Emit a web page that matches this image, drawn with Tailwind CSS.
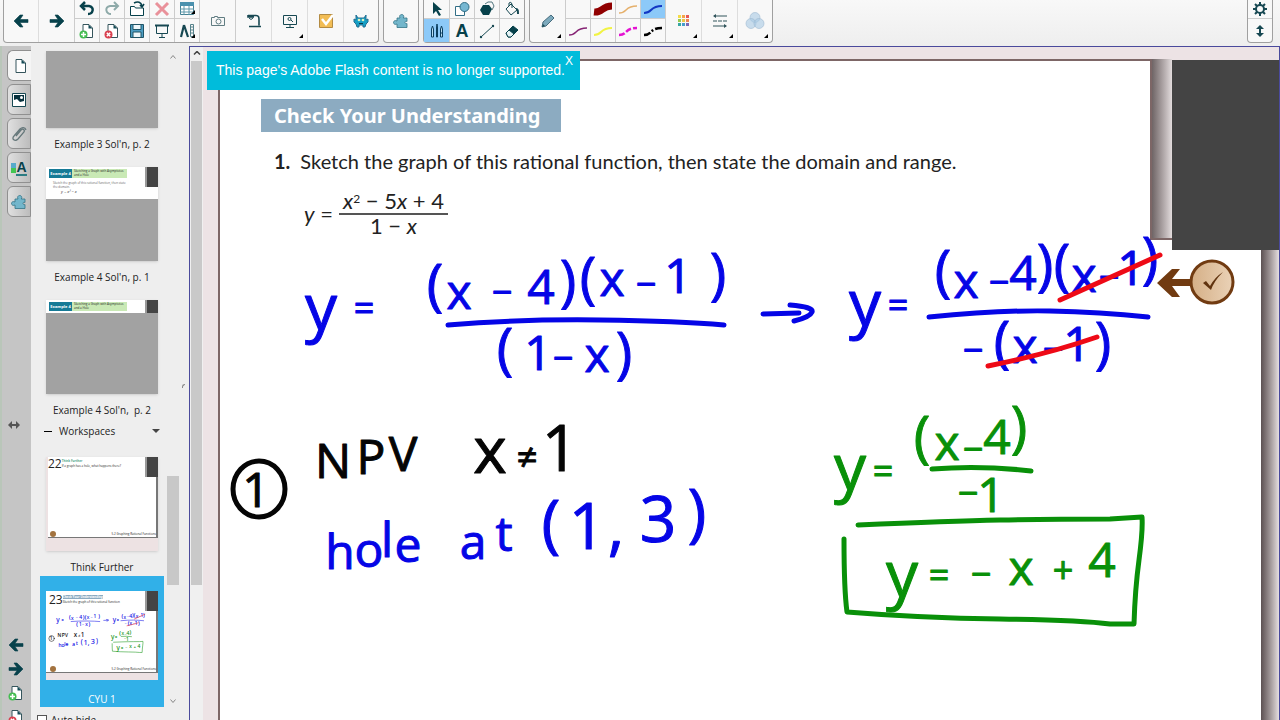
<!DOCTYPE html>
<html lang="en">
<head>
    <meta charset="UTF-8">
    <meta name="viewport" content="width=device-width, initial-scale=1.0">
    <title>Rational Functions - Notebook</title>
    <script src="https://cdn.jsdelivr.net/npm/@tailwindcss/browser@4"></script>
</head>
<body class="h-screen flex flex-col overflow-hidden bg-[#eeeeee] font-['Open_Sans',sans-serif] text-[#222222]">

    <!-- Shared icons -->
    <svg class="hidden">
        <symbol id="arrow-left" viewBox="0 0 16 16"><path d="M1 8 7 2h3L7 6.500h8v3H7L10 14H7z" fill="#07414b" stroke="#07414b" stroke-width=".6"/></symbol>
        <symbol id="arrow-right" viewBox="0 0 16 16"><path d="M15 8 9 2H6l3 4.500H1v3h8L6 14h3z" fill="#07414b" stroke="#07414b" stroke-width=".6"/></symbol>
        <symbol id="page" viewBox="0 0 16 16"><path d="M4 1.500h6l3.500 3.500v9.500H4z" fill="#fff" stroke="#35555c"/><path d="M9.500 1.500v4h4z" fill="#164c57"/></symbol>
        <symbol id="page-add" viewBox="0 0 16 16"><use href="#page"/><circle cx="4.500" cy="11.500" r="4" fill="#45bd52"/><path d="M4.500 9v5M2 11.500h5" stroke="#fff" stroke-width="1.500"/></symbol>
        <symbol id="page-delete" viewBox="0 0 16 16"><use href="#page"/><circle cx="4.500" cy="11.500" r="4" fill="#d9404f"/><path d="m2.800 9.800 3.400 3.400m0-3.400-3.400 3.400" stroke="#fff" stroke-width="1.500"/></symbol>
        <symbol id="puzzle" viewBox="0 0 16 16"><path d="M4 5h3c-1-2 0-3.500 1.700-3.500S11.500 3 10.300 5H14v3.500c-1.500-.8-2 .2-2 1s.8 1.500 2 1V14.500H4V11c-2 1-3.500 0-3.500-1.500S2 7 4 8z" fill="#73b6cb" stroke="#337487" stroke-width=".8"/></symbol>
        <symbol id="corner" viewBox="0 0 4 4"><path d="M4 0v4H0z" fill="#000"/></symbol>
    </svg>

    <!-- Toolbar -->
    <header class="flex h-[46px] shrink-0 items-start gap-1 bg-gradient-to-b from-[#f8f8f8] to-[#eeeeee] pl-[3px] pr-[7px]">
        <div class="flex h-[43px] rounded-b border border-t-0 border-[#a0a0a0] bg-[#f8f8f8]">
            <button aria-label="Previous page" class="flex w-[35px] items-center justify-center border-r border-[#dddddd]"><svg class="size-4"><use href="#arrow-left"/></svg></button>
            <button aria-label="Next page" class="flex w-[35px] items-center justify-center"><svg class="size-4"><use href="#arrow-right"/></svg></button>
            <div class="grid grid-cols-[repeat(5,25px)] grid-rows-[19px_23px]">
                <button aria-label="Undo" class="flex items-center justify-center border-b border-l border-[#cccccc]"><svg class="size-4" viewBox="0 0 16 16" fill="none" stroke="#07414b" stroke-width="2.500"><path d="M2 5h8c6 1 4 8-1 8M6 1 2 5l4 4"/></svg></button>
                <button aria-label="Redo" class="flex items-center justify-center border-b border-l border-[#cccccc]"><svg class="size-4" viewBox="0 0 16 16" fill="none" stroke="#8eaaa9" stroke-width="2"><path d="M14 5H6C0 6 2 13 7 13M10 1l4 4-4 4"/></svg></button>
                <button aria-label="Open" class="flex items-center justify-center border-b border-l border-[#cccccc]"><svg class="size-4" viewBox="0 0 16 16" fill="#fff" stroke="#07414b"><path d="M1.500 5.500h4l1 1.500h8v7.500h-13z"/><path d="M5 2c4-2 7-1 8 3m-2-1 2 2 2-3" fill="none" stroke-width="1.600"/></svg></button>
                <button aria-label="Delete" class="flex items-center justify-center border-b border-l border-[#cccccc]"><svg class="size-4" viewBox="0 0 16 16" stroke="#e9919a" stroke-width="3"><path d="m2 2 12 12M14 2 2 14"/></svg></button>
                <button aria-label="Table" class="relative flex items-center justify-center border-b border-l border-[#cccccc]"><svg class="size-4" viewBox="0 0 16 16"><path d="M1.500 1.500h13v12h-13z" fill="#fff" stroke="#438092"/><path d="M1 1h14v4H1z" fill="#4b91ae"/><path d="M1 8h14M1 11h14M5 5v9m5-9v9" stroke="#5f98aa"/></svg><svg class="absolute bottom-1 right-1 size-1"><use href="#corner"/></svg></button>
                <button aria-label="Add page" class="flex items-center justify-center border-l border-[#cccccc]"><svg class="size-4"><use href="#page-add"/></svg></button>
                <button aria-label="Delete page" class="flex items-center justify-center border-l border-[#cccccc]"><svg class="size-4"><use href="#page-delete"/></svg></button>
                <button aria-label="Save" class="flex items-center justify-center border-l border-[#cccccc]"><svg class="size-4" viewBox="0 0 16 16" stroke="#205466"><path d="M1.500 1.500h13v13h-13z" fill="#4d9dc3"/><path d="M4 1.500h8v5H4zM4 9h8v5.500H4z" fill="#eef7fa"/></svg></button>
                <button aria-label="Screen shade" class="flex items-center justify-center border-l border-[#cccccc]"><svg class="size-4" viewBox="0 0 16 16" fill="none" stroke="#174852"><path d="M1 2.500h14" stroke-width="2"/><path d="M2.500 3v7.500h11V3M8 11v3m-3 .5h6"/></svg></button>
                <button aria-label="Measurement tools" class="relative flex items-center justify-center border-l border-[#cccccc]"><svg class="size-4" viewBox="0 0 16 16" fill="none" stroke="#174852"><path d="m5 2-3 12M5 2l4 12" stroke-width="2.200"/><path d="M11.500 1.500h3v12h-3zM12 4h2m-2 3h2m-2 3h2" stroke="#56828b"/></svg><svg class="absolute bottom-1 right-1 size-1"><use href="#corner"/></svg></button>
            </div>
            <button aria-label="Capture" class="flex w-9 items-center justify-center border-l border-[#cccccc]"><svg class="size-4" viewBox="0 0 16 16" fill="none" stroke="#617d82"><path d="M1.500 4.500h3v-1h3v1h7v8h-13z"/><circle cx="8.500" cy="8.500" r="2.500"/></svg></button>
            <button aria-label="Document camera" class="flex w-9 items-center justify-center border-l border-[#cccccc]"><svg class="size-4" viewBox="0 0 16 16" fill="none" stroke="#174852"><path d="M2 2.500h8c3 0 3 2 3 5v5M2 2v2h6M3 13.500h12" stroke-width="1.600"/><path d="M3 5q2 3 4 0"/></svg></button>
            <button aria-label="Display" class="relative flex w-9 items-center justify-center border-l border-[#dddddd]"><svg class="size-4" viewBox="0 0 16 16" fill="none" stroke="#174852"><path d="M1.500 2.500h13v9h-13zM8 12v2m-4 .5h8"/><circle cx="7.500" cy="6" r="1.500"/><path d="m9 7 2 2"/></svg><svg class="absolute bottom-1 right-1 size-1"><use href="#corner"/></svg></button>
            <button aria-label="Response" class="flex w-9 items-center justify-center border-l border-[#dddddd]"><svg class="size-4" viewBox="0 0 16 16"><path d="M1.500 1.500h13v13h-13z" fill="#f2bd55" stroke="#b38b43"/><path d="m4 6 4 5 7-9" fill="none" stroke="#fff" stroke-width="2.500"/></svg></button>
            <button aria-label="Activity builder" class="flex w-[35px] items-center justify-center border-l border-[#dddddd]"><svg class="size-4" viewBox="0 0 16 16"><path d="M3 2l2 3h6l2-3v5l2-1v3l-2 2-1 3h-2v-2H6v2H4l-1-3-2-2V6l2 1z" fill="#159fc5" stroke="#236f92"/><circle cx="6" cy="7" r="1.300" fill="#dff2bd"/><circle cx="10" cy="7" r="1.300" fill="#dff2bd"/><path d="M6 10.500h4" stroke="#083d4f"/></svg></button>
        </div>

        <div class="flex h-[43px] w-9 justify-center rounded-b border border-t-0 border-[#a0a0a0] bg-[#f8f8f8]">
            <button aria-label="Add-ons" class="flex items-center justify-center"><svg class="size-4"><use href="#puzzle"/></svg></button>
        </div>

        <div class="grid h-[43px] grid-cols-[repeat(4,25px)] grid-rows-[19px_23px] rounded-b border border-t-0 border-[#a0a0a0] bg-[#f8f8f8]">
            <button aria-label="Select" class="flex items-center justify-center border-b border-[#cccccc]"><svg class="size-4" viewBox="0 0 16 16"><path d="m4 1 9 8H9l3 5-2 1-3-5-3 3z" fill="#07414b"/></svg></button>
            <button aria-label="Shapes" class="flex items-center justify-center border-b border-l border-[#cccccc]"><svg class="size-4" viewBox="0 0 16 16" stroke="#316e86"><path d="M1.500 5.500h9v9h-9z" fill="#fff"/><circle cx="10.500" cy="6" r="4.500" fill="#76b7d2"/></svg></button>
            <button aria-label="Regular polygons" class="flex items-center justify-center border-b border-l border-[#cccccc]"><svg class="size-4" viewBox="0 0 16 16"><path d="m6 3 3-2h4l2 4-2 4" fill="none" stroke="#53777f"/><path d="m4 4 6 0 3 4-3 6H4L1 9z" fill="#07414b"/></svg></button>
            <button aria-label="Fill" class="flex items-center justify-center border-b border-l border-[#cccccc]"><svg class="size-4" viewBox="0 0 16 16" fill="none" stroke="#174852"><path d="m7 3 6 6-6 5-5-6zM5 5V2q2-2 3 1v4"/><path d="M12 8c2 0 2 2 2 5" stroke-width="2"/></svg></button>
            <button aria-label="Pens" class="flex items-center justify-center bg-[#8cc9f8]"><svg class="size-4" viewBox="0 0 16 16" stroke="#0b3e60"><path d="M2.500 14V6L3.500 3l1 3v8z" fill="#b9def5"/><path d="M7.500 14V5L8 1l.500 4v9z" fill="#07414b"/><path d="M11.500 14V6l1-3 1 3v8zM11.500 10h2" fill="#b9def5"/></svg></button>
            <button aria-label="Text" class="flex items-center justify-center border-l border-[#cccccc] font-['Liberation_Sans',sans-serif] text-lg leading-none font-bold text-[#07414b]">A</button>
            <button aria-label="Line" class="flex items-center justify-center border-l border-[#cccccc]"><svg class="size-4" viewBox="0 0 16 16"><path d="M2 14 14 3" stroke="#174852"/><circle cx="2" cy="14" r="1.200" fill="#174852"/><circle cx="14" cy="3" r="1.200" fill="#174852"/></svg></button>
            <button aria-label="Eraser" class="flex items-center justify-center border-l border-[#cccccc]"><svg class="size-4" viewBox="0 0 16 16" stroke="#07414b"><path d="m2 10 7-7 5 4-7 7H4z" fill="#07414b"/><path d="m2 10 3-3 5 4-3 3H4z" fill="#e6f4f6"/></svg></button>
        </div>

        <div class="flex h-[43px] rounded-b border border-t-0 border-[#a0a0a0] bg-[#f8f8f8]">
            <button aria-label="Pen" class="relative flex w-[35px] items-center justify-center"><svg class="size-4" viewBox="0 0 16 16"><path d="m2 14 1-5 8-7 3 3-8 8z" fill="#7daabd" stroke="#476c7d"/><path d="m2 14 1-3 2 2z" fill="#174852"/></svg><svg class="absolute bottom-1 right-1 size-1"><use href="#corner"/></svg></button>
            <div class="grid grid-cols-[repeat(4,25px)] grid-rows-[19px_23px] border-r border-[#cccccc]">
                <button aria-label="Empty pen" class="border-b border-l border-[#cccccc]"></button>
                <button aria-label="Dark red brush" class="flex items-center justify-center border-b border-l border-[#cccccc]"><svg class="h-4 w-5" viewBox="0 0 20 16"><path d="M1 11c9 1 7-6 18-6" fill="none" stroke="#900000" stroke-width="7"/></svg></button>
                <button aria-label="Orange pen" class="flex items-center justify-center border-b border-l border-[#cccccc]"><svg class="h-4 w-5" viewBox="0 0 20 16"><path d="M1 12c9 0 5-7 18-7" fill="none" stroke="#e5b06c" stroke-width="1.500"/></svg></button>
                <button aria-label="Blue pen" class="flex items-center justify-center border-b border-l border-[#cccccc] bg-[#8cc9f8]"><svg class="h-4 w-5" viewBox="0 0 20 16"><path d="M1 12c9 0 5-7 18-7" fill="none" stroke="#1237c4" stroke-width="2"/></svg></button>
                <button aria-label="Purple pen" class="flex items-center justify-center border-l border-[#cccccc]"><svg class="h-4 w-5" viewBox="0 0 20 16"><path d="M1 12c9 0 5-7 18-7" fill="none" stroke="#862474" stroke-width="1.500"/></svg></button>
                <button aria-label="Yellow highlighter" class="flex items-center justify-center border-l border-[#cccccc]"><svg class="h-4 w-5" viewBox="0 0 20 16"><path d="M1 12c9 0 5-7 18-7" fill="none" stroke="#f1f344" stroke-width="2"/></svg></button>
                <button aria-label="Magenta dashed pen" class="flex items-center justify-center border-l border-[#cccccc]"><svg class="h-4 w-5" viewBox="0 0 20 16"><path d="M1 12c9 0 5-7 18-7" fill="none" stroke="#e413d2" stroke-width="2.500" stroke-dasharray="6 2"/></svg></button>
                <button aria-label="Black dashed pen" class="flex items-center justify-center border-l border-[#cccccc]"><svg class="h-4 w-5" viewBox="0 0 20 16"><path d="M1 12c9 0 5-7 18-7" fill="none" stroke="#000" stroke-width="2.500" stroke-dasharray="7 2 2 2"/></svg></button>
            </div>
            <button aria-label="Color" class="relative flex w-[35px] items-center justify-center"><svg class="size-4" viewBox="0 0 16 16"><path d="M2 2h3v3H2z" fill="#f6dc47"/><path d="M6 2h3v3H6z" fill="#f3a54c"/><path d="M10 2h3v3h-3z" fill="#e75a56"/><path d="M2 6h3v3H2z" fill="#9acb4c"/><path d="M6 6h3v3H6z" fill="#ecc747"/><path d="M10 6h3v3h-3z" fill="#ee8855"/><path d="M2 10h3v3H2z" fill="#36a7a1"/><path d="M6 10h3v3H6z" fill="#459dcc"/><path d="M10 10h3v3h-3z" fill="#7b68b6"/></svg><svg class="absolute bottom-1 right-1 size-1"><use href="#corner"/></svg></button>
            <button aria-label="Line style" class="relative flex w-9 items-center justify-center border-l border-[#dddddd]"><svg class="size-4" viewBox="0 0 16 16" stroke="#31545b"><path d="M2 3h13M1 13h13"/><path d="M1 8h14" stroke-dasharray="4 1"/><path d="M1 3l3-2v4zM15 13l-3-2v4z" fill="#31545b" stroke="none"/></svg><svg class="absolute bottom-1 right-1 size-1"><use href="#corner"/></svg></button>
            <button aria-label="Transparency" class="relative flex w-[35px] items-center justify-center border-l border-[#dddddd]"><svg class="size-5" viewBox="0 0 20 20" fill="#a9c9e4" fill-opacity=".6" stroke="#9db8d0" stroke-width=".6"><circle cx="10" cy="6.500" r="5"/><circle cx="6" cy="12.500" r="5"/><circle cx="14" cy="12.500" r="5"/></svg><svg class="absolute bottom-1 right-1 size-1"><use href="#corner"/></svg></button>
        </div>

        <div class="ml-auto grid h-[43px] w-[26px] grid-rows-[19px_23px] rounded-b border border-t-0 border-[#a0a0a0] bg-[#f8f8f8]">
            <button aria-label="Settings" class="flex items-center justify-center border-b border-[#cccccc]"><svg class="size-4" viewBox="0 0 16 16" fill="none" stroke="#174852"><circle cx="8" cy="8" r="4" stroke-width="2"/><path d="M8 1v3m0 8v3M1 8h3m8 0h3M3 3l2 2m6 6 2 2m0-10-2 2m-6 6-2 2" stroke-width="2"/></svg></button>
            <button aria-label="Move toolbar" class="flex items-center justify-center"><svg class="size-3" viewBox="0 0 12 12" fill="#174852"><path d="m6 0 4 4H7v4h3l-4 4-4-4h3V4H2z"/></svg></button>
        </div>
    </header>

    <main class="flex min-h-0 flex-1">
        <!-- Side tabs -->
        <nav class="flex w-[31px] shrink-0 flex-col overflow-hidden border-l-2 border-[#b9c6b9] bg-[#c5c5c5] pt-1">
            <div class="flex flex-col gap-[3px] pl-[5px]">
                <button aria-label="Page sorter" class="flex h-[31px] shrink-0 items-center justify-center rounded-l-md border border-r-0 border-[#909090] bg-[#f5f5f5]"><svg class="size-4"><use href="#page"/></svg></button>
                <button aria-label="Gallery" class="flex h-[31px] shrink-0 items-center justify-center rounded-l-md border border-[#909090] bg-gradient-to-r from-[#e0e0e0] to-[#bcbcbc]"><svg class="size-4" viewBox="0 0 16 16"><path d="M1.500 1.500h13v13h-13z" fill="#fff" stroke="#174852"/><path d="M3 3h10v9H3z" fill="#07313d"/><path d="m3 8 3-1 3 3 4-1v3H3z" fill="#fff"/><circle cx="10.500" cy="5.500" r="1.500" fill="#fff"/></svg></button>
                <button aria-label="Attachments" class="flex h-[31px] shrink-0 items-center justify-center rounded-l-md border border-[#909090] bg-gradient-to-r from-[#e0e0e0] to-[#bcbcbc]"><svg class="size-4" viewBox="0 0 16 16" fill="none" stroke="#65777a" stroke-width="1.300"><path d="m5 10 5-6c2-2 4 0 3 2l-6 7c-3 3-7 0-4-3l6-7c2-2 5-2 6 1"/></svg></button>
                <button aria-label="Properties" class="flex h-[31px] shrink-0 items-center justify-center rounded-l-md border border-[#909090] bg-gradient-to-r from-[#e0e0e0] to-[#bcbcbc]"><span class="flex flex-col"><span class="size-[5px] bg-[#56aacb]"></span><span class="size-[5px] bg-[#44c553]"></span></span><span class="border-b-2 border-[#2b7c83] font-['Liberation_Sans',sans-serif] text-sm leading-none font-bold text-[#07414b]">A</span></button>
                <button aria-label="Add-ons panel" class="flex h-[31px] shrink-0 items-center justify-center rounded-l-md border border-[#909090] bg-gradient-to-r from-[#e0e0e0] to-[#bcbcbc]"><svg class="size-4"><use href="#puzzle"/></svg></button>
            </div>
            <button aria-label="Resize panel" class="mt-[202px] flex h-3 w-6 shrink-0 items-center justify-center"><svg class="h-2 w-3" viewBox="0 0 12 8" fill="#555"><path d="m0 4 4-4v3h4V0l4 4-4 4V5H4v3z"/></svg></button>
            <div class="mt-[202px] flex flex-col pr-px">
                <button aria-label="Back one page" class="flex h-6 shrink-0 items-center justify-center"><svg class="size-4"><use href="#arrow-left"/></svg></button>
                <button aria-label="Forward one page" class="flex h-6 shrink-0 items-center justify-center"><svg class="size-4"><use href="#arrow-right"/></svg></button>
                <button aria-label="Insert page" class="flex h-6 shrink-0 items-center justify-center"><svg class="size-4"><use href="#page-add"/></svg></button>
                <button aria-label="Remove page" class="flex h-6 shrink-0 items-center justify-center"><svg class="size-4"><use href="#page-delete"/></svg></button>
            </div>
        </nav>

        <!-- Page sorter -->
        <aside class="flex w-[158px] shrink-0 overflow-hidden bg-[#eeeeee] text-[10px] leading-4">
            <div class="flex w-[133px] shrink-0 flex-col pl-[9px]">
                <figure class="flex flex-col items-center pt-[5px]">
                    <div class="h-[77px] w-[112px] bg-[#a2a2a2] shadow"></div>
                    <figcaption class="mt-2">Example 3 Sol'n, p. 2</figcaption>
                </figure>
                <figure class="mt-[15px] flex flex-col items-center">
                    <div class="h-[94px] w-[112px] bg-[#a2a2a2] shadow">
                        <div class="flex h-8 items-start bg-white pl-[3px]">
                            <div class="flex-1 pt-[2px]">
                                <div class="flex h-[9px] w-[78px] bg-[#c9e9b5] whitespace-nowrap">
                                    <span class="w-[23px] bg-[#157a96] text-center text-[4px] leading-[9px] font-bold text-white">Example 4</span>
                                    <span class="pl-[2px] text-[3px] leading-[4px]">Sketching a Graph with Asymptotes<br>and a Hole</span>
                                </div>
                                <div class="pt-[3px] pl-1 text-[3px] leading-[4px] whitespace-nowrap text-[#666666]">Sketch the graph of this rational function, then state<br>the domain.</div>
                                <div class="pl-3 text-[4px] leading-[6px] italic">y = x² − x</div>
                            </div>
                            <span class="h-5 w-[13px] border-l-2 border-[#999999] bg-[#444444]"></span>
                        </div>
                    </div>
                    <figcaption class="mt-2">Example 4 Sol'n, p. 1</figcaption>
                </figure>
                <figure class="mt-[15px] flex flex-col items-center">
                    <div class="h-[94px] w-[112px] bg-[#a2a2a2] shadow">
                        <div class="flex h-[13px] items-start justify-between bg-white pl-[3px]">
                            <div class="mt-[2px] flex h-[9px] w-[78px] bg-[#c9e9b5] whitespace-nowrap">
                                <span class="w-[23px] bg-[#157a96] text-center text-[4px] leading-[9px] font-bold text-white">Example 4</span>
                                <span class="pl-[2px] text-[3px] leading-[4px]">Sketching a Graph with Asymptotes<br>and a Hole</span>
                            </div>
                            <span class="h-[13px] w-[13px] border-l-2 border-[#999999] bg-[#444444]"></span>
                        </div>
                    </div>
                    <figcaption class="mt-2">Example 4 Sol'n,&nbsp; p. 2</figcaption>
                </figure>
                <button class="mt-[5px] flex h-4 items-center pl-1 text-left">
                    <span class="mr-[7px] h-px w-2 bg-black"></span>
                    <span>Workspaces</span>
                    <svg class="ml-auto mr-1 h-1 w-2" viewBox="0 0 8 4"><path d="M0 0h8L4 4z" fill="#444"/></svg>
                </button>
                <figure class="mt-[18px] flex flex-col items-center">
                    <div class="flex h-[94px] w-[112px] flex-col bg-[#ede2e3] pl-[2px] shadow">
                        <div class="flex h-[81px] flex-col justify-between border-b border-r-2 border-[#777777] bg-white">
                            <div class="flex items-start">
                                <span class="text-xs leading-[14px]">22</span>
                                <span class="pt-[2px] text-[3px] leading-[5px] whitespace-nowrap"><b class="text-[#4ea58c]">Think Further</b><br>If a graph has a hole, what happens there?</span>
                                <span class="-mr-[2px] ml-auto h-5 w-[13px] shrink-0 border-l-2 border-[#999999] bg-[#444444]"></span>
                            </div>
                            <div class="flex items-center justify-between pl-[2px] text-[3px] leading-[6px]"><span class="size-[6px] rounded-full bg-[#a3733f]"></span><span>5.2 Graphing Rational Functions</span></div>
                        </div>
                    </div>
                    <figcaption class="mt-2">Think Further</figcaption>
                </figure>
                <figure class="mt-px flex h-[131px] w-[124px] shrink-0 flex-col items-center bg-[#31b0e8] pt-[15px] text-white">
                    <div class="relative h-[89px] w-[112px] bg-[#ede2e3] text-[#222222]">
                        <div class="flex h-[82px] flex-col justify-between border-b border-r-2 border-[#777777] bg-white">
                            <div class="flex items-start">
                                <span class="pl-[3px] text-xs leading-[18px]">23</span>
                                <span class="mt-1 text-[3px] leading-[5px] whitespace-nowrap"><b class="bg-[#8cabc1] text-white">Check Your Understanding</b><br>Sketch the graph of this rational function</span>
                                <span class="-mr-[2px] ml-auto h-5 w-[13px] shrink-0 border-l-2 border-[#999999] bg-[#444444]"></span>
                            </div>
                            <div class="flex items-center justify-between pl-1 text-[3px] leading-[6px]"><span class="size-[6px] rounded-full bg-[#a3733f]"></span><span>5.2 Graphing Rational Functions</span></div>
                        </div>
                        <svg class="absolute inset-0 h-full w-full" viewBox="207 30 1078 860"><use href="#ink"/></svg>
                    </div>
                    <figcaption class="mt-[11px]">CYU 1</figcaption>
                </figure>
                <label class="mt-[5px] flex h-4 shrink-0 items-center gap-1"><input type="checkbox" class="-ml-[3px] size-[10px] appearance-none border border-[#555555] bg-white">Auto hide</label>
            </div>
            <div class="flex w-[18px] shrink-0 flex-col items-center pt-[9px]">
                <svg class="h-1 w-[6px] shrink-0" viewBox="0 0 6 4" fill="none" stroke="#888"><path d="m.5 3.500 2.500-3 2.500 3"/></svg>
                <span class="mt-[417px] h-[109px] w-3 shrink-0 bg-[#c8c8c8]"></span>
                <svg class="mt-[114px] h-1 w-[6px] shrink-0" viewBox="0 0 6 4" fill="none" stroke="#888"><path d="m.5.5 2.500 3 2.500-3"/></svg>
            </div>
            <span class="mt-[338px] h-1 w-[3px] rounded-tl border-l border-t border-[#888888]"></span>
        </aside>

        <!-- Whiteboard -->
        <section class="flex min-w-0 flex-1 border border-b-0 border-[#4a4a9c] bg-[#ede3e5]">
            <div class="flex w-[13px] shrink-0 flex-col items-center bg-[#f0f0f0] pt-1">
                <svg class="h-1 w-2 shrink-0" viewBox="0 0 8 4" fill="none" stroke="#444" stroke-width="1.500"><path d="m1 3.500 3-3 3 3"/></svg>
                <span class="mt-[6px] h-[524px] w-[11px] shrink-0 bg-[#c9c9c9]"></span>
            </div>

            <div class="relative flex min-w-0 flex-1 pl-[15px] pt-3">
                <div class="flex-1 border-l-2 border-t-2 border-[#7d6666] bg-white px-[41px] pt-[38px]">
                    <h1 class="flex h-[33px] w-[300px] items-center bg-[#8cabc1] px-[13px] font-['Noto_Sans',sans-serif] text-xl font-bold whitespace-nowrap text-white">Check Your Understanding</h1>
                    <p class="mt-[14px] flex gap-[10px] pl-[13px] font-['Lato',sans-serif] text-xl leading-[30px] whitespace-nowrap"><b>1.</b><span>Sketch the graph of this rational function, then state the domain and range.</span></p>
                    <div class="mt-[14px] flex items-center gap-[6px] pl-[43px] font-['Lato',sans-serif] text-[22px] leading-[22px]">
                        <span><i>y</i> =</span>
                        <span class="flex w-[109px] flex-col items-center">
                            <span class="w-full border-b-2 border-[#555555] text-center whitespace-nowrap"><i>x</i><sup class="text-xs">2</sup> − 5<i>x</i> + 4</span>
                            <span>1 − <i>x</i></span>
                        </span>
                    </div>
                </div>
                <div class="w-[18px] shrink-0 bg-gradient-to-r from-[#5c5152] to-[#e6dfe0]"></div>

                <!-- Covered corner -->
                <div class="absolute right-0 top-0 flex h-[203px] w-[129px] items-start bg-[#ede3e5]">
                    <div class="mt-3 h-[181px] w-[22px] border-b-2 border-l-2 border-[#7d6666] bg-gradient-to-r from-[#6f6566] to-[#e3dcdd]"></div>
                    <div class="mt-[13px] h-[190px] flex-1 bg-[#444444]"></div>
                </div>
                <div class="absolute right-[107px] top-[193px] h-[10px] w-[22px] bg-white"></div>

                <!-- Ink layer -->
                <svg class="absolute inset-0 h-full w-full" viewBox="203 47 1076 673" preserveAspectRatio="xMinYMin meet">
                    <defs><linearGradient id="wood"><stop stop-color="#d5af86"/><stop offset="1" stop-color="#ead2b7"/></linearGradient></defs>
                    <path d="m1157 283 15-14h8l-8 10h20v7h-20l8 11h-8z" fill="#713b11"/>
                    <circle cx="1212" cy="282" r="21" fill="url(#wood)" stroke="#713b11" stroke-width="3"/>
                    <path d="m1203 283 3-2 4 5q5-9 13-14-9 9-12 18z" fill="#60330f"/>
                    <g id="ink" class="font-['Open_Sans',sans-serif] text-[48px]" text-anchor="middle" stroke-linecap="round" stroke-linejoin="round">
                        <g fill="#0505e6" stroke="#0505e6">
                            <text x="321 364" y="330 321"><tspan class="text-[64px]">y</tspan><tspan class="text-[36px]">=</tspan></text>
                            <text x="435 459 502 541 568 588 612 646 678 718" y="305 309 305 304 301 298 296 297 293 294"><tspan class="text-[56px]">(</tspan>x<tspan class="text-[36px]">−</tspan>4<tspan class="text-[56px]">)(</tspan>x<tspan class="text-[36px]">−</tspan>1<tspan class="text-[56px]">)</tspan></text>
                            <path d="M448 325Q520 319 600 320T724 325" fill="none" stroke-width="5"/>
                            <text x="505 538 563 597 624" y="369 370 371 372 373"><tspan class="text-[56px]">(</tspan>1<tspan class="text-[36px]">−</tspan>x<tspan class="text-[56px]">)</tspan></text>
                            <path d="m763 314 36-1m-9-8q24 2 22 7t-18 9" fill="none" stroke-width="5"/>
                            <text x="865 898" y="326 318"><tspan class="text-[64px]">y</tspan><tspan class="text-[36px]">=</tspan></text>
                            <text x="943 966 999 1023 1045 1062 1084 1109 1131 1150" y="291 298 295 290 285 285 292 290 285 278"><tspan class="text-[56px]">(</tspan>x<tspan class="text-[36px]">−</tspan>4<tspan class="text-[56px]">)(</tspan>x<tspan class="text-[36px]">−</tspan>1<tspan class="text-[56px]">)</tspan></text>
                            <path d="M929 317Q1000 310 1050 311T1148 317" fill="none" stroke-width="5"/>
                            <text x="973 1002 1025 1053 1077 1103" y="363 362 363 362 361 363"><tspan class="text-[36px]">−</tspan><tspan class="text-[56px]">(</tspan>x<tspan class="text-[36px]">−</tspan>1<tspan class="text-[56px]">)</tspan></text>
                            <text x="340 369 387 408" y="569 567 557 562">hole</text>
                            <text x="473 504" y="559 551">at</text>
                            <text class="text-[64px]" x="551 587 616 658 697" y="546 549 549 542 535">(1,3)</text>
                        </g>
                        <g fill="none" stroke="#ee0a16" stroke-width="5">
                            <path d="m1060 300 100-45M988 366q60-12 109-29"/>
                        </g>
                        <g fill="#050505" stroke="#050505">
                            <ellipse cx="259" cy="489" rx="26" ry="28" fill="none" stroke-width="5"/>
                            <text x="256" y="507">1</text>
                            <text x="333 371 403" y="478 474 471">NPV</text>
                            <text x="490 527 560" y="473 470 471"><tspan class="text-[64px]">x</tspan><tspan class="text-[36px]">≠</tspan><tspan class="text-[64px]">1</tspan></text>
                        </g>
                        <g fill="#099009" stroke="#099009">
                            <text x="850 883" y="490 484"><tspan class="text-[64px]">y</tspan><tspan class="text-[36px]">=</tspan></text>
                            <text x="922 947 973 997 1019" y="457 460 462 454 447"><tspan class="text-[56px]">(</tspan>x<tspan class="text-[36px]">−</tspan>4<tspan class="text-[56px]">)</tspan></text>
                            <path d="M932 469q48-4 99 2" fill="none" stroke-width="5"/>
                            <text x="968 991" y="506 512"><tspan class="text-[36px]">−</tspan>1</text>
                            <path d="M858 525Q950 521 1000 520T1110 519L1142 517Q1143 530 1139 560T1134 624L1110 624Q1080 620 1000 619T847 612Q844 590 844 539" fill="none" stroke-width="5"/>
                            <text x="902 939 981 1021 1063 1102" y="597 588 587 585 583 577"><tspan class="text-[64px]">y</tspan><tspan class="text-[36px]">=−</tspan>x<tspan class="text-[36px]">+</tspan>4</text>
                        </g>
                    </g>
                </svg>

                <!-- Flash notice -->
                <div role="alert" class="absolute left-1 top-1 h-[39px] w-[373px] bg-[#00bcdb] pl-[9px] font-['Liberation_Sans',sans-serif] text-white">
                    <p class="text-sm leading-[39px] whitespace-nowrap">This page's Adobe Flash content is no longer supported.</p>
                    <button aria-label="Close notice" class="absolute right-1 top-0 px-[3px] pt-[3px] text-xs leading-[14px]">X</button>
                </div>
            </div>
        </section>
    </main>

</body>
</html>
